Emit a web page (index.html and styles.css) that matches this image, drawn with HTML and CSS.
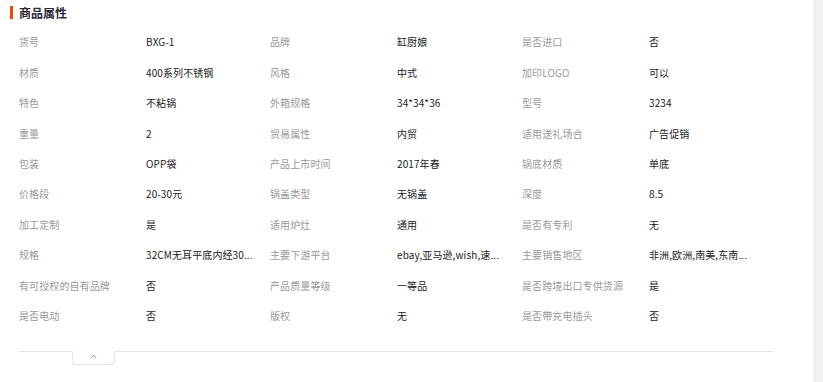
FILE: index.html
```html
<!DOCTYPE html>
<html lang="zh-CN">
<head>
<meta charset="utf-8">
<title>商品属性</title>
<link rel="stylesheet" href="styles.css">
</head>
<body>
<div class="page">
  <main class="content">
    <h2 class="title"><span class="mark"></span>商品属性</h2>
    <div class="attrs">
      <div class="k">货号</div><div class="v">BXG-1</div>
      <div class="k">品牌</div><div class="v">缸厨娘</div>
      <div class="k">是否进口</div><div class="v">否</div>

      <div class="k">材质</div><div class="v">400系列不锈钢</div>
      <div class="k">风格</div><div class="v">中式</div>
      <div class="k">加印LOGO</div><div class="v">可以</div>

      <div class="k">特色</div><div class="v">不粘锅</div>
      <div class="k">外箱规格</div><div class="v">34*34*36</div>
      <div class="k">型号</div><div class="v">3234</div>

      <div class="k">重量</div><div class="v">2</div>
      <div class="k">贸易属性</div><div class="v">内贸</div>
      <div class="k">适用送礼场合</div><div class="v">广告促销</div>

      <div class="k">包装</div><div class="v">OPP袋</div>
      <div class="k">产品上市时间</div><div class="v">2017年春</div>
      <div class="k">锅底材质</div><div class="v">单底</div>

      <div class="k">价格段</div><div class="v">20-30元</div>
      <div class="k">锅盖类型</div><div class="v">无锅盖</div>
      <div class="k">深度</div><div class="v">8.5</div>

      <div class="k">加工定制</div><div class="v">是</div>
      <div class="k">适用炉灶</div><div class="v">通用</div>
      <div class="k">是否有专利</div><div class="v">无</div>

      <div class="k">规格</div><div class="v">32CM无耳平底内经30...</div>
      <div class="k">主要下游平台</div><div class="v">ebay,亚马逊,wish,速...</div>
      <div class="k">主要销售地区</div><div class="v">非洲,欧洲,南美,东南...</div>

      <div class="k">有可授权的自有品牌</div><div class="v">否</div>
      <div class="k">产品质量等级</div><div class="v">一等品</div>
      <div class="k">是否跨境出口专供货源</div><div class="v">是</div>

      <div class="k">是否电动</div><div class="v">否</div>
      <div class="k">版权</div><div class="v">无</div>
      <div class="k">是否带充电插头</div><div class="v">否</div>
    </div>
    <div class="fold">
      <button class="fold-tab" type="button" aria-label="收起">
        <svg width="7" height="5" viewBox="0 0 7 5"><path d="M0.7 4.2 L3.5 1.2 L6.3 4.2" fill="none" stroke="#9aa0a8" stroke-width="1"/></svg>
      </button>
    </div>
  </main>
  <aside class="track"></aside>
</div>
</body>
</html>
```

FILE: styles.css
```css
html, body {
  margin: 0;
  padding: 0;
  background: #fff;
}
body {
  font-family: "Noto Sans CJK SC", "Microsoft YaHei", sans-serif;
  font-size: 10px;
  color: #333;
}
.page {
  display: flex;
  width: 823px;
  height: 382px;
  overflow: hidden;
}
.content {
  width: 813px;
  flex: none;
  padding: 0 0 0 19px;
  box-sizing: border-box;
}
.track {
  flex: 1;
  background: #f1f1f1;
}
.title {
  position: relative;
  margin: 0;
  height: 26px;
  line-height: 26px;
  font-size: 12px;
  font-weight: bold;
  color: #2a2a36;
}
.mark {
  position: absolute;
  left: -9px;
  top: 6px;
  width: 3px;
  height: 13px;
  background: #ff4400;
}
.attrs {
  display: grid;
  grid-template-columns: 127px 124px 127px 125px 127px 124px;
  grid-auto-rows: 30.45px;
  align-items: center;
  width: 754px;
  padding-top: 1px;
}
.k, .v {
  white-space: nowrap;
  overflow: hidden;
  line-height: 16px;
  letter-spacing: 0.1px;
}
.k {
  color: #999;
}
.v {
  color: #222;
}
.fold {
  width: 754px;
  margin-top: 20px;
  border-top: 1px solid #e3e3e3;
  padding-left: 53px;
  box-sizing: border-box;
}
.fold-tab {
  display: flex;
  align-items: center;
  justify-content: center;
  width: 43px;
  height: 14px;
  margin: -1px 0 0 0;
  padding: 0 0 4px 0;
  border: 1px solid #e3e3e3;
  border-top: 1px solid #fff;
  border-radius: 0 0 4px 4px;
  background: #fff;
  cursor: pointer;
}
```
